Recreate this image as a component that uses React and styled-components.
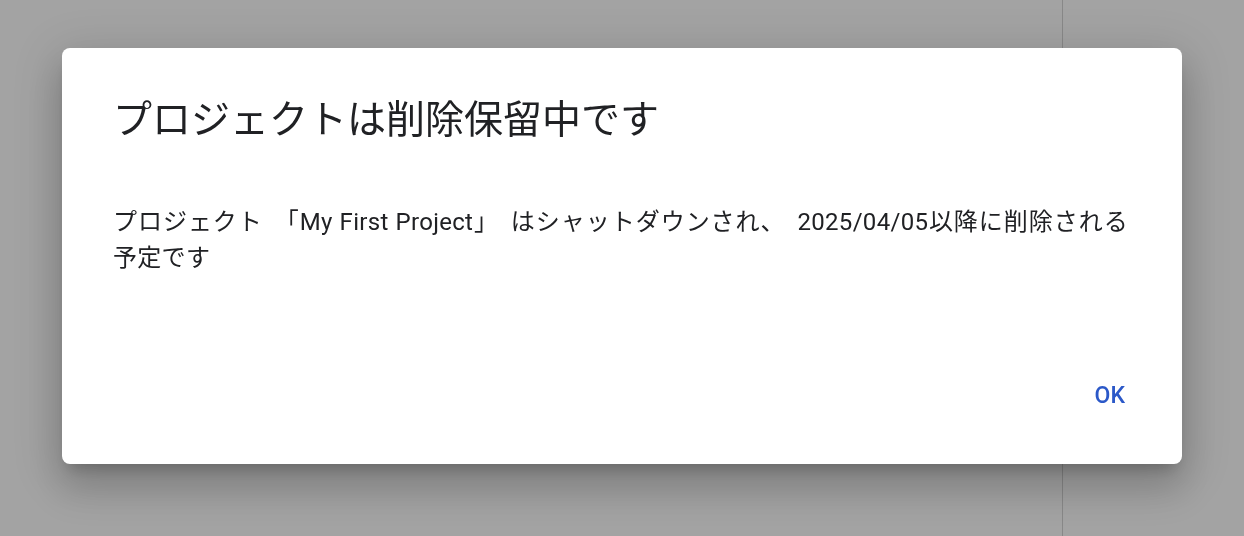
import styled, { createGlobalStyle } from "styled-components";

const Global = createGlobalStyle`
  html, body {
    margin: 0;
    height: 100%;
    overflow: hidden;
  }
  body {
    background: #a3a3a3;
    font-family: Roboto, "Noto Sans CJK JP", sans-serif;
  }
  #root {
    height: 100%;
  }
`;

const Page = styled.div`
  display: flex;
  height: 100%;
`;

const Main = styled.div`
  width: 1062px;
  border-right: 1px solid #888;
`;

const Side = styled.div`
  flex: 1;
`;

const Scrim = styled.div`
  position: fixed;
  inset: 0;
  display: flex;
  justify-content: center;
  align-items: flex-start;
  padding-top: 48px;
`;

const Dialog = styled.div`
  width: 1120px;
  height: 416px;
  box-sizing: border-box;
  background: #fff;
  border-radius: 8px;
  box-shadow: 0 24px 38px 3px rgba(0, 0, 0, 0.14), 0 9px 46px 8px rgba(0, 0, 0, 0.12),
    0 11px 15px -7px rgba(0, 0, 0, 0.2);
  padding: 48px 54px 52px 51px;
  display: flex;
  flex-direction: column;
`;

const Title = styled.h2`
  margin: 0;
  font-weight: 400;
  font-size: 39px;
  line-height: 48px;
  color: #202124;
`;

const Body = styled.p`
  margin: 58px 0 0;
  font-size: 24px;
  line-height: 36px;
  letter-spacing: 0.3px;
  color: #202124;
  text-align: justify;
`;

const Punct = styled.span`
  font-family: "Noto Sans CJK JP", sans-serif;
  margin-left: ${(p) => (p.$open ? "0.5em" : "0")};
  margin-right: ${(p) => (p.$open ? "0" : "0.5em")};
`;

const Actions = styled.div`
  margin-top: auto;
  display: flex;
  justify-content: flex-end;
  padding-right: 3px;
`;

const TextButton = styled.button`
  border: none;
  background: none;
  padding: 0;
  font-family: Roboto, sans-serif;
  font-weight: 500;
  font-size: 23px;
  line-height: 32px;
  color: #2b58c8;
  cursor: pointer;
`;

export default function App() {
  return (
    <>
      <Global />
      <Page>
        <Main />
        <Side />
      </Page>
      <Scrim>
        <Dialog>
          <Title>プロジェクトは削除保留中です</Title>
          <Body>
            プロジェクト<Punct $open>「</Punct>My First Project<Punct>」</Punct>はシャットダウンされ
            <Punct>、</Punct>2025/04/05以降に削除される予定です
          </Body>
          <Actions>
            <TextButton>OK</TextButton>
          </Actions>
        </Dialog>
      </Scrim>
    </>
  );
}
